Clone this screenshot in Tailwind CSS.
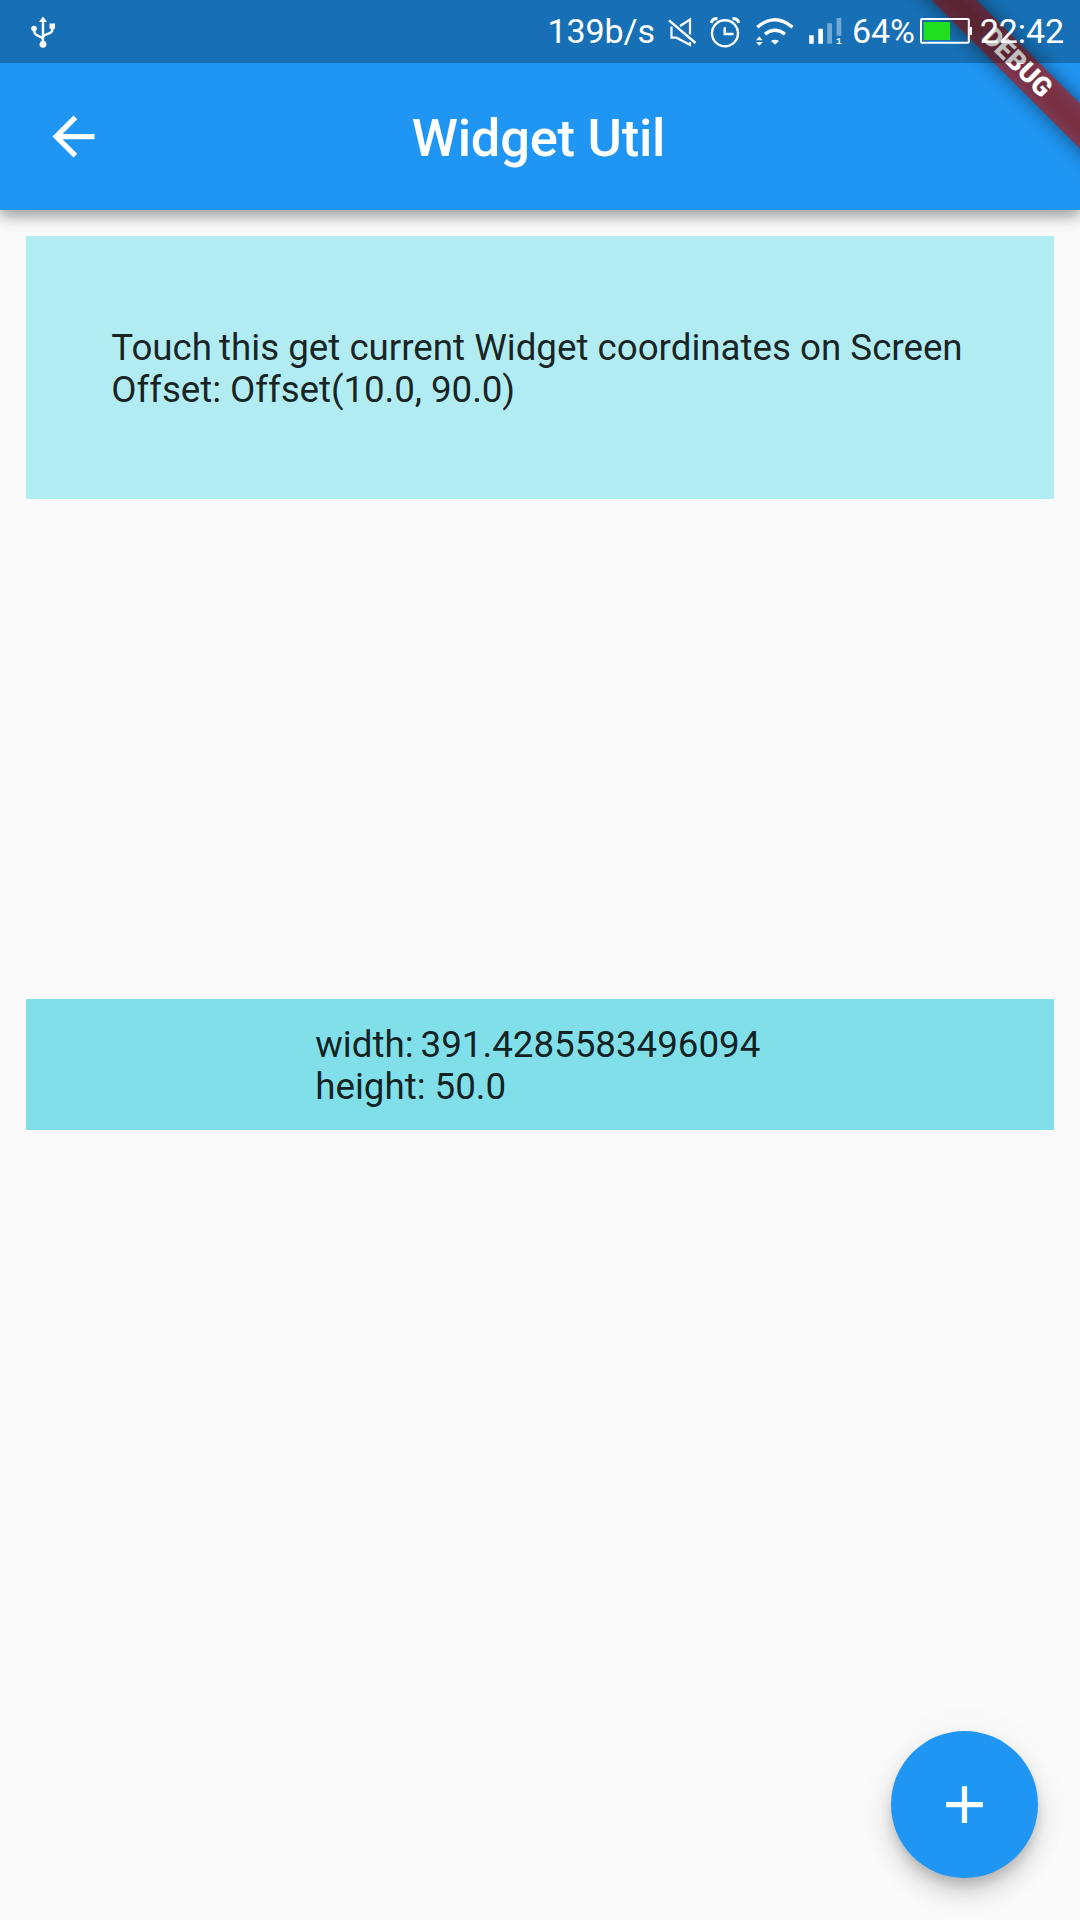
<!DOCTYPE html>
<html lang="en">
<head>
<meta charset="utf-8">
<title>Widget Util</title>
<script src="https://cdn.jsdelivr.net/npm/@tailwindcss/browser@4"></script>
</head>
<body class="bg-[#fafafa]">
<div class="relative flex h-[1920px] w-[1080px] flex-col overflow-hidden bg-[#fafafa] font-[Roboto,sans-serif]">

  <!-- App bar -->
  <header class="relative flex h-[210px] shrink-0 items-center bg-[#1f96f3] px-[42px] pt-[63px] text-white shadow-[0_5px_10px_rgba(0,0,0,0.2),0_10px_13px_rgba(0,0,0,0.14),0_3px_26px_rgba(0,0,0,0.05)]">
    <svg class="h-[63px] w-[63px]" viewBox="0 0 24 24" fill="currentColor"><path d="M20 11H7.83l5.59-5.59L12 4l-8 8 8 8 1.41-1.41L7.83 13H20v-2z"/></svg>
    <h1 class="flex-1 pt-[2px] pr-[66px] text-center text-[52.5px] leading-[62px] font-medium tracking-[-0.25px]">Widget Util</h1>
  </header>

  <!-- Content -->
  <main class="flex flex-col px-[26.25px] pt-[26.25px]">
    <section class="flex h-[262.5px] items-center bg-[#b0ecf2] pt-[2px] pl-[85px]">
      <p class="text-[36.75px] leading-[42px] tracking-[-0.025px] whitespace-nowrap text-black/87"><span class="[word-spacing:-2px]">Touch </span>this get current Widget coordinates on Screen<br><span class="tracking-[-0.07px]">Offset: Offset(10.0, 90.0)</span></p>
    </section>
    <section class="mt-[500px] flex h-[131.25px] items-center bg-[#80dfe8] pt-[4px] pl-[289px]">
      <p class="text-[36.75px] leading-[42px] tracking-[-0.03px] whitespace-nowrap text-black/87"><span class="[word-spacing:-2px]">width: </span>391.4285583496094<br>height: 50.0</p>
    </section>
  </main>

  <!-- Floating action button -->
  <button class="absolute right-[42px] bottom-[42px] flex h-[147px] w-[147px] items-center justify-center rounded-full bg-[#1f96f3] text-white shadow-[0_8px_13px_-3px_rgba(0,0,0,0.2),0_16px_26px_rgba(0,0,0,0.14),0_3px_47px_rgba(0,0,0,0.04)]" aria-label="Add">
    <svg class="h-[63px] w-[63px]" viewBox="0 0 24 24" fill="currentColor"><path d="M19 13h-6v6h-2v-6H5v-2h6V5h2v6h6v2z"/></svg>
  </button>

  <!-- Debug ribbon -->
  <div class="absolute top-0 right-0 h-[210px] w-[210px] overflow-hidden">
    <div class="absolute top-[47.25px] left-[-3px] h-[31.5px] w-[300px] rotate-45 bg-black/50 blur-[10px]"></div>
    <div class="absolute top-[47.25px] left-[-3px] flex h-[31.5px] w-[300px] rotate-45 items-center justify-center bg-[#b71c1c]/63 text-[26.8px] leading-none font-black text-white">DEBUG</div>
  </div>

  <!-- System status bar -->
  <div class="absolute inset-x-0 top-0 flex h-[63px] items-center bg-black/25 pr-[16px] pl-[28px] text-[34px] leading-[40px] text-white">
    <svg class="h-[63px] w-[32px]" viewBox="28 0 32 63" fill="none" stroke="currentColor" stroke-width="2.4">
      <path d="M43 20V43M34.3 29V31.500C34.300 36.500 42 36 43 39M52.300 26V30C52.300 34.500 44 33.500 43 36.500"/>
      <path d="M43 16.500L47 22H39ZM49.500 23.500H55V28.700H49.500Z" fill="currentColor" stroke="none"/>
      <circle cx="34" cy="28.500" r="2.800" fill="currentColor" stroke="none"/>
      <circle cx="43" cy="44.300" r="3.400" fill="currentColor" stroke="none"/>
    </svg>
    <span class="ml-auto -mt-[2px] tracking-[-0.1px]">139b/s</span>
    <svg class="ml-[11px] h-[63px] w-[32px]" viewBox="666 0 32 63" fill="none" stroke="currentColor" stroke-width="2.4">
      <path d="M669 20.300L695.500 43"/>
      <path d="M671.500 26.500V37.700H676.500L690 45V42M680 26L690 19.500V34.500" stroke-width="2.2"/>
    </svg>
    <svg class="ml-[9px] h-[63px] w-[36px]" viewBox="707 0 36 63" fill="none" stroke="currentColor">
      <circle cx="725" cy="33.300" r="13" stroke-width="2.400"/>
      <path d="M724.700 27.300V34H733.500" stroke-width="2.400"/>
      <path d="M711.300 23C711.800 20 714 18.300 717.500 18.800M738.700 23C738.200 20 736 18.300 732.500 18.800" stroke-width="3"/>
    </svg>
    <svg class="ml-[11px] h-[63px] w-[42px]" viewBox="754 0 42 63" fill="none" stroke="currentColor" stroke-width="3.400">
      <path d="M757.300 27.200Q774.800 12.500 792.500 27.200M765 34.200Q774.800 26.500 785 34.200"/>
      <path d="M771 41Q774.800 38.500 779 41L775 44.500ZM756 40.200L759.300 36.600L762.700 40.200ZM756 42L759.300 45.700L762.700 42Z" fill="currentColor" stroke="none"/>
    </svg>
    <svg class="ml-[11px] h-[63px] w-[36px]" viewBox="807 0 36 63" fill="currentColor">
      <path d="M809.200 35.300H813.700V43.700H809.200ZM818.300 28.700H823V43.700H818.300Z"/>
      <path d="M827.300 23.300H832V43.700H827.300ZM836.600 18H841.300V35.700H836.600Z" fill-opacity=".4"/>
      <text x="836" y="43.700" font-family="Liberation Mono" font-weight="700" font-size="9.500">1</text>
    </svg>
    <span class="ml-[9px] -mt-[2px] tracking-[-0.1px]">64%</span>
    <svg class="ml-[4px] h-[63px] w-[54px]" viewBox="919 0 54 63" fill="none">
      <rect x="921" y="19" width="47.800" height="23.800" rx="1" stroke="currentColor" stroke-width="2"/>
      <path d="M969.500 27H972V35H969.500Z" fill="currentColor"/>
      <rect x="923.700" y="22" width="26.300" height="18" fill="#1fe01f"/>
    </svg>
    <span class="ml-[7px] -mt-[2px] tracking-[-0.1px]">22:42</span>
  </div>
</div>
</body>
</html>
